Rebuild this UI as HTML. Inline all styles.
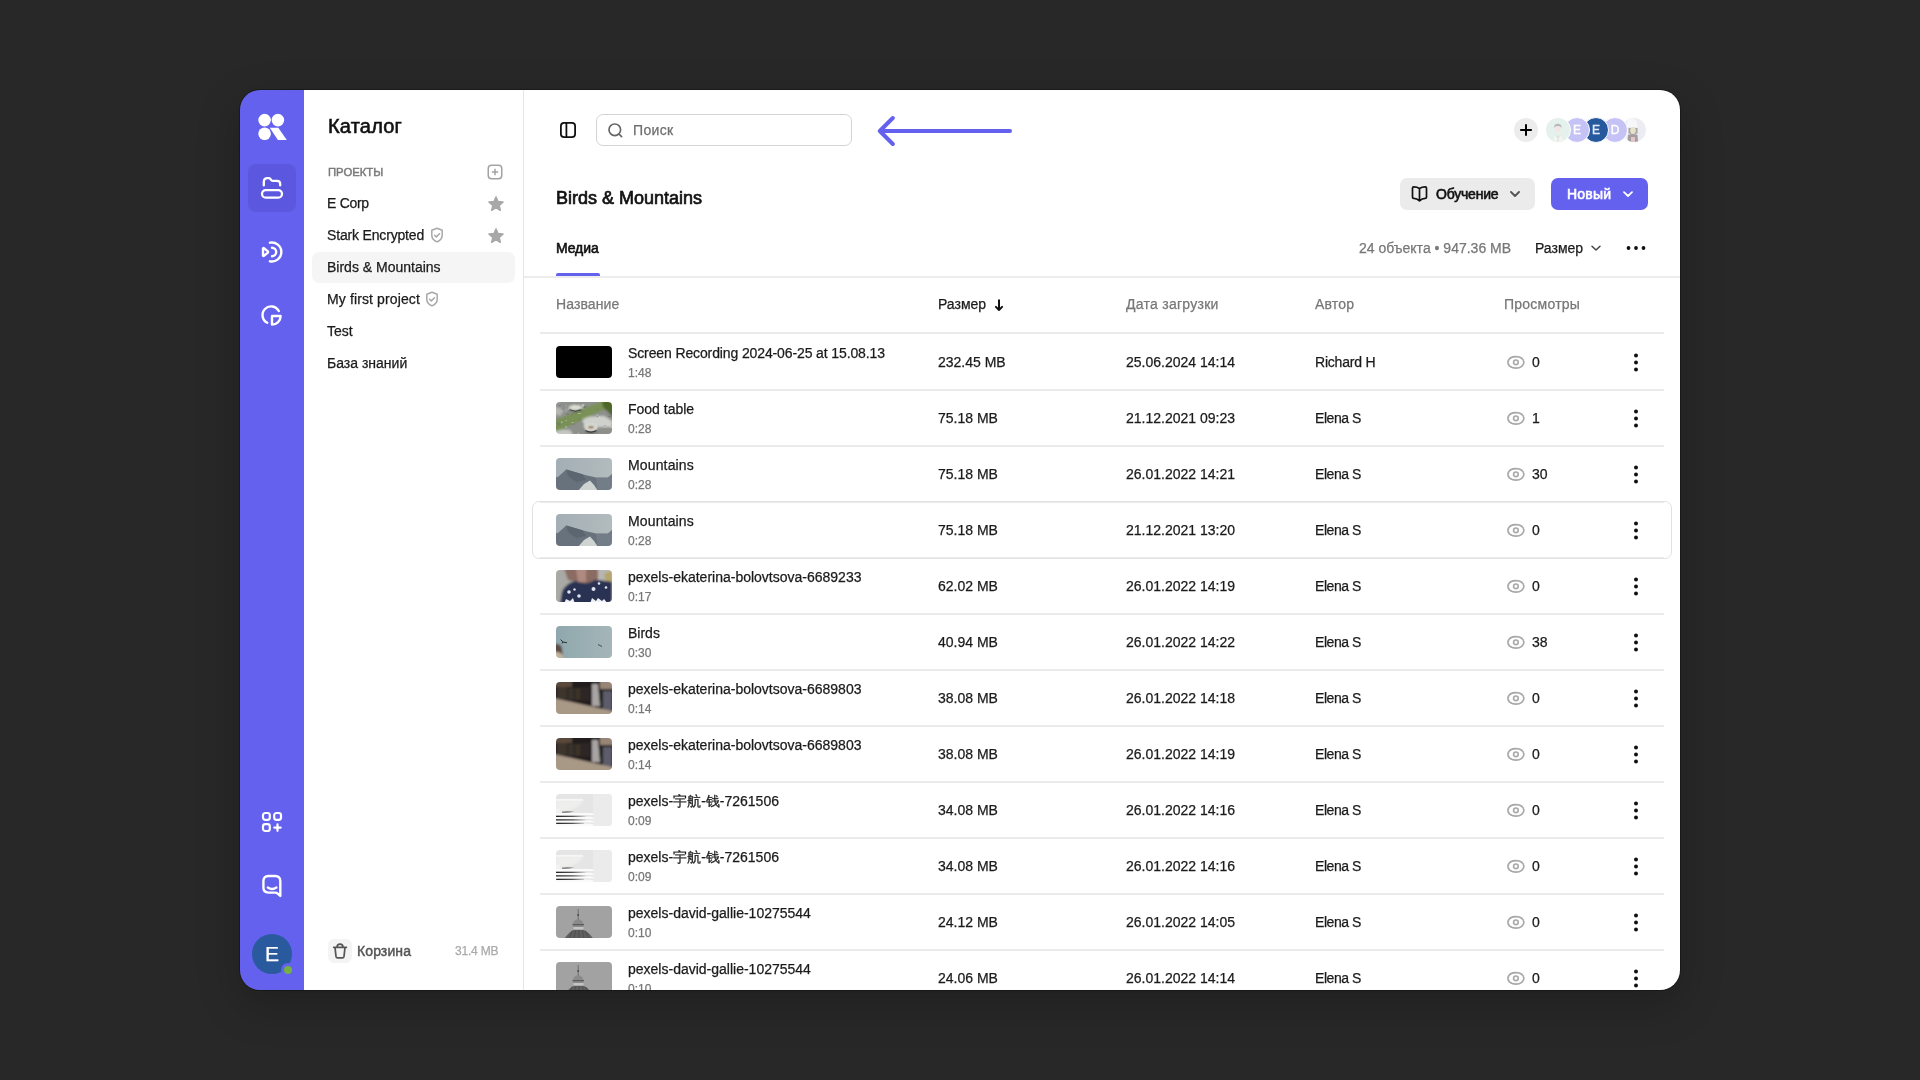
<!DOCTYPE html>
<html><head><meta charset="utf-8">
<style>
*{box-sizing:border-box;margin:0;padding:0}
html,body{width:1920px;height:1080px;overflow:hidden;background:#282828}
body{font-family:"Liberation Sans",sans-serif;color:#1b1b1b;position:relative;-webkit-text-stroke-width:0.25px}
#app{position:absolute;left:0;top:0;width:1920px;height:1080px;background:#fff;will-change:transform;clip-path:inset(90px 240px 90px 240px round 20px)}
.a{position:absolute;white-space:nowrap}
#nav{position:absolute;left:240px;top:90px;width:64px;height:900px;background:#6461ef}
#side{position:absolute;left:304px;top:90px;width:220px;height:900px;background:#fff;border-right:1px solid #e6e6e6}
.navact{position:absolute;left:248px;top:164px;width:48px;height:48px;border-radius:8px;background:#5b58df}
.ic{position:absolute;fill:none;stroke:#fff;stroke-width:2.3;stroke-linecap:round;stroke-linejoin:round}
.proj{position:absolute;left:327px;font-size:14px;line-height:16px;color:#1b1b1b;white-space:nowrap}
.sel{position:absolute;left:312px;top:252px;width:203px;height:31px;border-radius:7px;background:#f5f5f5}
.row{position:absolute;left:540px;width:1124px;height:56px;border-bottom:2px solid #ebebeb}
.row .th{position:absolute;left:16px;top:11px;border-radius:4px}
.row .nm{position:absolute;left:88px;top:10px;font-size:14px;line-height:16px;white-space:nowrap;color:#1b1b1b}
.row .du{position:absolute;left:88px;top:31px;font-size:12px;line-height:14px;color:#777;white-space:nowrap}
.row .c{position:absolute;top:19px;font-size:14px;line-height:16px;white-space:nowrap;color:#1b1b1b}
.row .sz{left:398px}.row .dt{left:586px}.row .au{left:775px}.row .vw{left:992px}
.row .eye{position:absolute;left:966px;top:17px}
.row .dots{position:absolute;left:1093px;top:17px;fill:#111}
.row.hov::after{content:"";box-sizing:border-box;position:absolute;left:-8px;top:-2px;width:1140px;height:58px;border:1px solid #e2e2e2;border-radius:7px}
.hdr{position:absolute;top:296px;font-size:14px;line-height:16px;color:#777;white-space:nowrap}
</style></head><body>
<div class="a" style="left:240px;top:90px;width:1440px;height:900px;border-radius:20px;box-shadow:0 0 0 1px rgba(0,0,0,.3),0 14px 44px rgba(0,0,0,.22)"></div>
<div id="app">
 <div id="nav"></div>
 <div class="navact"></div>
 <!-- logo -->
 <svg class="a" style="left:252px;top:106px" width="40" height="40" viewBox="0 0 40 40">
  <circle cx="12.6" cy="14.1" r="6.3" fill="#fff"/>
  <circle cx="25.9" cy="14.1" r="6.3" fill="#fff"/>
  <circle cx="12.6" cy="27.8" r="6.3" fill="#fff"/>
  <path d="M17.8 21.7 H26.3 L34.8 33.9 H25.9 Z" fill="#fff"/>
 </svg>
 <!-- drive icon -->
 <svg class="ic" style="left:260px;top:176px" width="24" height="24" viewBox="0 0 24 24">
  <path d="M3.8 9.4 V6 Q3.8 2.2 7.4 2.2 H8.6 Q9.8 2.2 10.6 3.2 L11.4 4.2 Q12 4.8 13 4.8 H17 Q20.2 4.8 20.2 8 V9.4"/>
  <rect x="2" y="14.2" width="20" height="7.4" rx="3.7"/>
 </svg>
 <!-- broadcast -->
 <svg class="ic" style="left:256px;top:236px;stroke-width:2.4" width="32" height="32" viewBox="0 0 32 32">
  <path d="M13.9 6.7 A9.5 9.5 0 1 1 13.9 25.3"/>
  <path d="M16 11.8 A4.2 4.2 0 0 1 16 20.2"/>
  <path d="M7 12.6 Q7 11.6 8 12.2 L11.6 15.1 Q12.6 16 11.6 16.9 L8 19.8 Q7 20.4 7 19.4 Z"/>
 </svg>
 <!-- pie -->
 <svg class="ic" style="left:256px;top:300px;stroke-width:2.4" width="32" height="32" viewBox="0 0 32 32">
  <path d="M22.8 11 A8.65 8.65 0 1 0 11.3 22.8"/>
  <path d="M16 16 H24.6 A8.6 8.6 0 0 1 16 24.6 Z"/>
 </svg>
 <!-- apps -->
 <svg class="ic" style="left:256px;top:806px;stroke-width:2.2" width="32" height="32" viewBox="0 0 32 32">
  <rect x="7" y="7" width="6.8" height="6.8" rx="2.3"/>
  <rect x="18.2" y="7" width="6.8" height="6.8" rx="2.3"/>
  <rect x="7" y="18.2" width="6.8" height="6.8" rx="2.3"/>
  <path d="M21.5 18.4 V24.8 M18.3 21.6 H24.7"/>
 </svg>
 <!-- chat -->
 <svg class="ic" style="left:256px;top:870px;stroke-width:2.4" width="32" height="32" viewBox="0 0 32 32">
  <path d="M24.3 26 V11 Q24.3 6 19.3 6 H12.4 Q7.4 6 7.4 11 V17.6 Q7.4 22.6 12.4 22.6 H19 Q20.6 22.6 22 23.8 Z"/>
  <path d="M11.8 17.6 Q16 20.4 20.4 17.6"/>
 </svg>
 <!-- avatar -->
 <div class="a" style="left:252px;top:934px;width:40px;height:40px;border-radius:50%;background:#2a5a9e;color:#fff;font-size:21px;line-height:40px;text-align:center">E</div>
 <div class="a" style="left:281px;top:963px;width:14px;height:14px;border-radius:50%;background:#75b043;border:3px solid #6461ef"></div>

 <div id="side"></div>
 <div class="a" style="left:328px;top:114px;font-size:20px;line-height:24px;letter-spacing:0.2px;color:#111;-webkit-text-stroke:0.6px currentColor">Каталог</div>
 <div class="a" style="left:328px;top:165px;font-size:11.3px;line-height:14px;color:#7a7a7a;letter-spacing:0px;-webkit-text-stroke:0.45px currentColor">ПРОЕКТЫ</div>
 <svg class="a" style="left:487px;top:164px" width="16" height="16" viewBox="0 0 16 16"><rect x="1.25" y="1.25" width="13.5" height="13.5" rx="3.2" fill="none" stroke="#a3a3a3" stroke-width="1.5"/><path d="M8 4.8 V11.2 M4.8 8 H11.2" stroke="#a3a3a3" stroke-width="1.5"/></svg>
 <div class="sel"></div>
 <div class="proj" style="top:195px;letter-spacing:-0.3px">E Corp</div>
 <div class="proj" style="top:227px;letter-spacing:-0.17px">Stark Encrypted</div>
 <div class="proj" style="top:259px">Birds &amp; Mountains</div>
 <div class="proj" style="top:291px;letter-spacing:0.12px">My first project</div>
 <div class="proj" style="top:323px">Test</div>
 <div class="proj" style="top:355px">База знаний</div>
 <svg class="a" style="left:430px;top:227px" width="14" height="16" viewBox="0 0 14 16"><path d="M7 1.3 L12.2 3.3 V8.2 Q12.2 12.6 7 14.9 Q1.8 12.6 1.8 8.2 V3.3 Z" fill="none" stroke="#a8a8a8" stroke-width="1.5" stroke-linejoin="round"/><path d="M4.6 8.3 L6.3 9.9 L9.5 6.7" fill="none" stroke="#a8a8a8" stroke-width="1.5" stroke-linecap="round" stroke-linejoin="round"/></svg>
 <svg class="a" style="left:425px;top:291px" width="14" height="16" viewBox="0 0 14 16"><path d="M7 1.3 L12.2 3.3 V8.2 Q12.2 12.6 7 14.9 Q1.8 12.6 1.8 8.2 V3.3 Z" fill="none" stroke="#a8a8a8" stroke-width="1.5" stroke-linejoin="round"/><path d="M4.6 8.3 L6.3 9.9 L9.5 6.7" fill="none" stroke="#a8a8a8" stroke-width="1.5" stroke-linecap="round" stroke-linejoin="round"/></svg>
 <svg class="a" style="left:487px;top:195px" width="18" height="18" viewBox="0 0 18 18"><path d="M9.00 2.00 L10.93 6.64 L15.94 7.04 L12.12 10.32 L13.29 15.21 L9.00 12.59 L4.71 15.21 L5.88 10.32 L2.06 7.04 L7.07 6.64 Z" fill="#a8a8a8" stroke="#a8a8a8" stroke-width="1.6" stroke-linejoin="round"/></svg>
 <svg class="a" style="left:487px;top:227px" width="18" height="18" viewBox="0 0 18 18"><path d="M9.00 2.00 L10.93 6.64 L15.94 7.04 L12.12 10.32 L13.29 15.21 L9.00 12.59 L4.71 15.21 L5.88 10.32 L2.06 7.04 L7.07 6.64 Z" fill="#a8a8a8" stroke="#a8a8a8" stroke-width="1.6" stroke-linejoin="round"/></svg>
 <!-- trash -->
 <div class="a" style="left:328px;top:939px;width:24px;height:24px;border-radius:6px;background:#f4f4f4"></div>
 <svg class="a" style="left:330px;top:941px" width="20" height="20" viewBox="0 0 20 20"><path d="M3.7 6.3 H16.4 M7 6.3 Q7 3.2 10 3.2 Q13 3.2 13 6.3 M5 6.3 L6 15.4 Q6.2 16.9 7.6 16.9 H12.4 Q13.8 16.9 14 15.4 L15 6.3" fill="none" stroke="#555" stroke-width="1.7" stroke-linecap="round" stroke-linejoin="round"/></svg>
 <div class="a" style="left:357px;top:943px;font-size:14px;line-height:16px;color:#555;letter-spacing:0.1px;-webkit-text-stroke:0.45px currentColor">Корзина</div>
 <div class="a" style="left:455px;top:944px;font-size:12px;line-height:14px;color:#aaa;letter-spacing:-0.2px">31.4 MB</div>

 <!-- top bar -->
 <svg class="a" style="left:558px;top:120px" width="20" height="20" viewBox="0 0 20 20"><rect x="2.9" y="2.9" width="14.2" height="14.2" rx="3.2" fill="none" stroke="#111" stroke-width="1.8"/><path d="M8.4 3 V17" stroke="#111" stroke-width="1.8"/></svg>
 <div class="a" style="left:596px;top:114px;width:256px;height:32px;border:1px solid #d4d4d4;border-radius:7px"></div>
 <svg class="a" style="left:606px;top:121px" width="18" height="18" viewBox="0 0 18 18"><circle cx="8.8" cy="8.8" r="5.8" fill="none" stroke="#666" stroke-width="1.7"/><path d="M13 13 L15.6 15.6" stroke="#666" stroke-width="1.7" stroke-linecap="round"/></svg>
 <div class="a" style="left:633px;top:122px;font-size:14px;line-height:16px;color:#6f6f6f;letter-spacing:0.35px">Поиск</div>
 <svg class="a" style="left:870px;top:110px" width="150" height="40" viewBox="0 0 150 40"><path d="M22.8 8 L9.8 21 L22.8 34 M9.8 21 H140" fill="none" stroke="#6461ef" stroke-width="4" stroke-linecap="round" stroke-linejoin="round"/></svg>

 <!-- avatars -->
 <div class="a" style="left:1514px;top:118px;width:24px;height:24px;border-radius:50%;background:#ececec"></div>
 <svg class="a" style="left:1514px;top:118px" width="24" height="24" viewBox="0 0 24 24"><path d="M12 6.2 V17.8 M6.2 12 H17.8" stroke="#000" stroke-width="2"/></svg>
 <div class="a" style="z-index:5;left:1545px;top:117px;width:26px;height:26px;border-radius:50%;background:#e6f0ec;border:1.5px solid #fff"></div>
 <svg class="a" style="z-index:5;left:1546px;top:118px" width="24" height="24" viewBox="0 0 24 24"><circle cx="12" cy="12" r="11.6" fill="#e5f1ec"/><path d="M7.5 24 Q7.8 16.5 12 15.8 Q16.2 16.5 16.5 24Z" fill="#f3f5f3"/><path d="M12 16 V24 M9.5 17 L12 20 L14.5 17" stroke="#d4d8d4" stroke-width=".8" fill="none"/><ellipse cx="11.8" cy="11" rx="2.6" ry="3.2" fill="#f7e4e4"/><path d="M8 10 Q8 5.8 11.8 5.8 Q15.6 5.8 15.6 10 Q14.6 8 11.8 8 Q9 8 8 10Z" fill="#b9b9b9"/></svg>
 <div class="a" style="z-index:4;left:1564px;top:117px;width:26px;height:26px;border-radius:50%;background:#c5c2f6;border:1.5px solid #fff;color:#fff;font-size:12px;line-height:25px;text-align:center;-webkit-text-stroke:0.4px currentColor">E</div>
 <div class="a" style="z-index:3;left:1583px;top:117px;width:26px;height:26px;border-radius:50%;background:#26589e;border:1.5px solid #fff;color:#dfeaff;font-size:12px;line-height:25px;text-align:center;-webkit-text-stroke:0.4px currentColor">E</div>
 <div class="a" style="z-index:2;left:1602px;top:117px;width:26px;height:26px;border-radius:50%;background:#c5c2f6;border:1.5px solid #fff;color:#fff;font-size:12px;line-height:25px;text-align:center;-webkit-text-stroke:0.4px currentColor">D</div>
 <div class="a" style="z-index:1;left:1621px;top:117px;width:26px;height:26px;border-radius:50%;background:#ececf3;border:1.5px solid #fff;overflow:hidden"><svg width="24" height="24" viewBox="0 0 24 24" style="display:block"><path d="M4.5 9 Q4 1 10 0.5 Q16 1 15.5 9Z" fill="#f7f7fa"/><path d="M5.5 24 L6 17 Q10.5 15 15.5 17 L16 24Z" fill="#a49c9e"/><rect x="9" y="19" width="4" height="5" fill="#e2c6c8"/><path d="M6.5 10 H15.5 V15.5 Q11 17 6.5 15.5Z" fill="#a7a5a2"/><ellipse cx="11" cy="12.5" rx="2.8" ry="3.6" fill="#e6e2cc"/></svg></div>

 <!-- title + buttons -->
 <div class="a" style="left:556px;top:187px;font-size:18px;line-height:22px;color:#111;-webkit-text-stroke:0.7px #111">Birds &amp; Mountains</div>
 <div class="a" style="left:1400px;top:178px;width:135px;height:32px;border-radius:7px;background:#ebebeb"></div>
 <svg class="a" style="left:1409px;top:184px" width="20" height="20" viewBox="0 0 20 20"><path d="M10.5 4.5 Q8 2.9 4.8 2.9 Q3.5 2.9 3.5 4 V13.2 Q3.5 14.3 4.8 14.3 Q8 14.3 10.5 16.8 Q13 14.3 16.2 14.3 Q17.5 14.3 17.5 13.2 V4 Q17.5 2.9 16.2 2.9 Q13 2.9 10.5 4.5Z M10.5 4.5 V16.8" fill="none" stroke="#111" stroke-width="1.7" stroke-linejoin="round" stroke-linecap="round"/></svg>
 <div class="a" style="left:1436px;top:186px;font-size:14px;line-height:16px;color:#111;letter-spacing:-0.2px;-webkit-text-stroke:0.6px currentColor">Обучение</div>
 <svg class="a" style="left:1508px;top:187px" width="14" height="14" viewBox="0 0 14 14"><path d="M3 5 L7 9 L11 5" fill="none" stroke="#555" stroke-width="1.9" stroke-linecap="round" stroke-linejoin="round"/></svg>
 <div class="a" style="left:1551px;top:178px;width:97px;height:32px;border-radius:7px;background:#6461ef"></div>
 <div class="a" style="left:1567px;top:186px;font-size:14px;line-height:16px;color:#fff;letter-spacing:0.2px;-webkit-text-stroke:0.6px currentColor">Новый</div>
 <svg class="a" style="left:1621px;top:187px" width="14" height="14" viewBox="0 0 14 14"><path d="M3 5.2 L7 9 L11 5.2" fill="none" stroke="#fff" stroke-width="1.8" stroke-linecap="round" stroke-linejoin="round"/></svg>

 <!-- tabs -->
 <div class="a" style="left:556px;top:240px;font-size:14px;line-height:16px;color:#111;letter-spacing:-0.1px;-webkit-text-stroke:0.6px currentColor">Медиа</div>
 <div class="a" style="left:556px;top:273px;width:44px;height:5px;border-radius:2px 2px 0 0;background:#6461ef"></div>
 <div class="a" style="left:524px;top:276px;width:1156px;height:2px;background:#ececec"></div>
 <div class="a" style="left:1359px;top:240px;font-size:14px;line-height:16px;color:#777">24 объекта • 947.36 MB</div>
 <div class="a" style="left:1535px;top:240px;font-size:14px;line-height:16px;color:#1b1b1b">Размер</div>
 <svg class="a" style="left:1589px;top:241px" width="14" height="14" viewBox="0 0 14 14"><path d="M3 5.2 L7 9 L11 5.2" fill="none" stroke="#444" stroke-width="1.5" stroke-linecap="round" stroke-linejoin="round"/></svg>
 <svg class="a" style="left:1626px;top:238px" width="20" height="20" viewBox="0 0 20 20"><circle cx="2.5" cy="10" r="1.9" fill="#111"/><circle cx="10" cy="10" r="1.9" fill="#111"/><circle cx="17.5" cy="10" r="1.9" fill="#111"/></svg>

 <!-- table header -->
 <div class="hdr" style="left:556px;letter-spacing:0.1px">Название</div>
 <div class="hdr" style="left:938px;color:#1b1b1b">Размер</div>
 <svg class="a" style="left:992px;top:297px" width="14" height="16" viewBox="0 0 14 16"><path d="M7 3.2 V13 M3.9 9.9 L7 13 L10.1 9.9" fill="none" stroke="#111" stroke-width="2" stroke-linecap="round" stroke-linejoin="round"/></svg>
 <div class="hdr" style="left:1126px;letter-spacing:0.27px">Дата загрузки</div>
 <div class="hdr" style="left:1315px;letter-spacing:0.2px">Автор</div>
 <div class="hdr" style="left:1504px;letter-spacing:0.24px">Просмотры</div>
 <div class="a" style="left:540px;top:332px;width:1124px;height:2px;background:#ebebeb"></div>
<div class="row" style="top:335px">
 <svg class="th" width="56" height="32" viewBox="0 0 56 32"><rect width="56" height="32" fill="#000"/></svg>
 <div class="nm" style="letter-spacing:-0.12px">Screen Recording 2024-06-25 at 15.08.13</div><div class="du">1:48</div>
 <div class="c sz">232.45 MB</div><div class="c dt">25.06.2024 14:14</div><div class="c au" style="letter-spacing:-0.2px">Richard H</div>
 <svg class="eye" width="20" height="20" viewBox="0 0 20 20"><path d="M1.8 10.35 C2.4 7 5.6 4.6 9.9 4.6 C14.2 4.6 17.4 7 18 10.35 C17.4 13.7 14.2 16.1 9.9 16.1 C5.6 16.1 2.4 13.7 1.8 10.35Z" fill="none" stroke="#a8a8a8" stroke-width="1.6"/><circle cx="9.9" cy="10.3" r="2.35" fill="none" stroke="#a8a8a8" stroke-width="1.6"/></svg><div class="c vw">0</div><svg class="dots" width="6" height="20" viewBox="0 0 6 20"><circle cx="3" cy="3.5" r="2"/><circle cx="3" cy="10.5" r="2"/><circle cx="3" cy="17.5" r="2"/></svg>
</div>
<div class="row" style="top:391px">
 <svg class="th" width="56" height="32" viewBox="0 0 56 32"><defs><filter id="bfood" x="-10%" y="-10%" width="120%" height="120%"><feGaussianBlur stdDeviation="0.8"/></filter></defs><g filter="url(#bfood)"><rect x="-2" y="-2" width="60" height="36" fill="#8e908c"/><path d="M26 15 L48 14 L56 19 L56 25 L28 25 Z" fill="#cfd1cd"/><path d="M-2 27 L14 28 L18 34 H-2Z" fill="#c4c6c2"/><path d="M-2 4 L8 8 L4 14 L-2 12Z" fill="#b4b6b2"/><path d="M-2 18 C8 15 18 10 28 6 C36 3 42 1 48 -2 L58 -2 L58 4 C46 8 36 13 28 17 C18 22 8 27 -2 30Z" fill="#74904a" opacity=".8"/><path d="M46 -2 H58 V16 C55 13 51 9 47 5Z" fill="#4a6224" opacity=".9"/><ellipse cx="19.5" cy="6" rx="7" ry="3" fill="#dde2d4"/><path d="M13 7.5 Q19.5 11 26 7.5" stroke="#2a2a2a" stroke-width="1.3" fill="none"/><ellipse cx="35" cy="26" rx="6" ry="3.6" fill="#eef0ec"/><ellipse cx="35" cy="25.2" rx="3.6" ry="1.5" fill="#8a7048"/><path d="M29 28.5 Q35 32.5 41 28.5" stroke="#1e1e1e" stroke-width="1.5" fill="none"/></g><ellipse cx="18.1" cy="4.8" rx="0.7" ry="0.7" fill="#e8eae6" opacity=".45"/><ellipse cx="20.5" cy="1.9" rx="0.9" ry="0.5" fill="#707270" opacity=".45"/><ellipse cx="23.4" cy="7.7" rx="1.1" ry="0.9" fill="#707270" opacity=".45"/><ellipse cx="6.9" cy="7.1" rx="1.7" ry="0.7" fill="#707270" opacity=".45"/><ellipse cx="22.2" cy="31.2" rx="1.3" ry="0.5" fill="#e8eae6" opacity=".45"/><ellipse cx="23.5" cy="17.3" rx="1.0" ry="0.9" fill="#707270" opacity=".45"/><ellipse cx="10.1" cy="18.6" rx="1.0" ry="0.7" fill="#d0d2ce" opacity=".45"/><ellipse cx="3.5" cy="1.9" rx="1.2" ry="0.7" fill="#d0d2ce" opacity=".45"/><ellipse cx="43.5" cy="14.9" rx="1.0" ry="0.5" fill="#f2f2f0" opacity=".45"/><ellipse cx="10.1" cy="25.0" rx="1.3" ry="0.7" fill="#e8eae6" opacity=".45"/><ellipse cx="49.0" cy="23.3" rx="1.3" ry="0.4" fill="#5a5c58" opacity=".45"/><ellipse cx="28.7" cy="5.3" rx="0.8" ry="0.7" fill="#5a5c58" opacity=".45"/><ellipse cx="2.2" cy="21.4" rx="1.3" ry="0.9" fill="#707270" opacity=".45"/><ellipse cx="17.6" cy="22.2" rx="1.2" ry="0.9" fill="#707270" opacity=".45"/><ellipse cx="3.9" cy="3.0" rx="1.2" ry="0.8" fill="#5a5c58" opacity=".45"/><ellipse cx="3.4" cy="22.4" rx="1.8" ry="0.9" fill="#707270" opacity=".45"/><ellipse cx="15.9" cy="12.3" rx="0.6" ry="0.7" fill="#5a5c58" opacity=".45"/><ellipse cx="9.4" cy="3.7" rx="0.9" ry="0.6" fill="#e8eae6" opacity=".45"/><ellipse cx="41.3" cy="12.7" rx="0.7" ry="0.7" fill="#f2f2f0" opacity=".45"/><ellipse cx="30.8" cy="28.3" rx="1.6" ry="0.6" fill="#f2f2f0" opacity=".45"/><ellipse cx="23.3" cy="11.5" rx="1.7" ry="0.5" fill="#f2f2f0" opacity=".45"/><ellipse cx="9.9" cy="7.4" rx="0.6" ry="0.9" fill="#d0d2ce" opacity=".45"/><ellipse cx="10.2" cy="9.0" rx="1.1" ry="0.6" fill="#d0d2ce" opacity=".45"/><ellipse cx="31.7" cy="30.5" rx="1.7" ry="0.8" fill="#707270" opacity=".45"/><ellipse cx="41.4" cy="14.6" rx="1.1" ry="0.6" fill="#707270" opacity=".45"/><ellipse cx="5.8" cy="20.3" rx="0.8" ry="1.0" fill="#e8eae6" opacity=".45"/><ellipse cx="24.7" cy="3.5" rx="0.7" ry="0.4" fill="#707270" opacity=".45"/><ellipse cx="8.5" cy="3.2" rx="1.3" ry="0.4" fill="#5a5c58" opacity=".45"/><ellipse cx="11.6" cy="12.0" rx="1.7" ry="0.8" fill="#5a5c58" opacity=".45"/><ellipse cx="26.6" cy="3.7" rx="1.8" ry="0.7" fill="#f2f2f0" opacity=".45"/><ellipse cx="27.1" cy="2.7" rx="1.5" ry="0.8" fill="#e8eae6" opacity=".45"/><ellipse cx="26.8" cy="22.1" rx="0.6" ry="1.0" fill="#707270" opacity=".45"/><ellipse cx="29.6" cy="4.7" rx="1.7" ry="0.9" fill="#707270" opacity=".45"/><ellipse cx="16.7" cy="20.6" rx="1.4" ry="0.6" fill="#e8eae6" opacity=".45"/><ellipse cx="20.5" cy="5.3" rx="1.2" ry="0.9" fill="#d0d2ce" opacity=".45"/><ellipse cx="18.5" cy="7.1" rx="1.6" ry="0.9" fill="#d0d2ce" opacity=".45"/><ellipse cx="41.4" cy="7.3" rx="1.2" ry="0.8" fill="#707270" opacity=".45"/><ellipse cx="55.4" cy="25.3" rx="0.9" ry="0.8" fill="#f2f2f0" opacity=".45"/><ellipse cx="53.6" cy="14.3" rx="1.7" ry="0.6" fill="#5a5c58" opacity=".45"/><ellipse cx="12.3" cy="7.3" rx="1.0" ry="0.7" fill="#d0d2ce" opacity=".45"/><path d="M13.5 7.8 Q19.5 10.6 25.5 7.8" stroke="#333" stroke-width="1" fill="none" opacity=".8"/><path d="M29.5 28.6 Q35 31.6 40.5 28.6" stroke="#222" stroke-width="1.1" fill="none" opacity=".8"/></svg>
 <div class="nm">Food table</div><div class="du">0:28</div>
 <div class="c sz">75.18 MB</div><div class="c dt">21.12.2021 09:23</div><div class="c au" style="letter-spacing:-0.45px">Elena S</div>
 <svg class="eye" width="20" height="20" viewBox="0 0 20 20"><path d="M1.8 10.35 C2.4 7 5.6 4.6 9.9 4.6 C14.2 4.6 17.4 7 18 10.35 C17.4 13.7 14.2 16.1 9.9 16.1 C5.6 16.1 2.4 13.7 1.8 10.35Z" fill="none" stroke="#a8a8a8" stroke-width="1.6"/><circle cx="9.9" cy="10.3" r="2.35" fill="none" stroke="#a8a8a8" stroke-width="1.6"/></svg><div class="c vw">1</div><svg class="dots" width="6" height="20" viewBox="0 0 6 20"><circle cx="3" cy="3.5" r="2"/><circle cx="3" cy="10.5" r="2"/><circle cx="3" cy="17.5" r="2"/></svg>
</div>
<div class="row" style="top:447px">
 <svg class="th" width="56" height="32" viewBox="0 0 56 32"><defs><linearGradient id="gsky" x1="0" x2="1" y1="0" y2="0"><stop offset="0" stop-color="#a2adb5"/><stop offset="1" stop-color="#b3bcbd"/></linearGradient><filter id="bmnt" x="-10%" y="-10%" width="120%" height="120%"><feGaussianBlur stdDeviation="0.5"/></filter></defs><g filter="url(#bmnt)"><rect x="-2" y="-2" width="60" height="36" fill="url(#gsky)"/><path d="M-2 19.5 L2 19 L10.2 11.5 L20.5 14.5 L27 16.5 L40 19.5 L52 19.5 L56 16 V34 H-2Z" fill="#68727d"/><path d="M10.2 11.5 L20.5 14.5 L27 16.5 L30 22 L20 24 L12 18Z" fill="#5c6670"/><path d="M40 20 L52 20 L56 17 V34 H42Z" fill="#737d88"/><path d="M22 33 L28 26 L34 22.5 L38 27 L42 33Z" fill="#cfd4d2"/></g></svg>
 <div class="nm" style="letter-spacing:0.15px">Mountains</div><div class="du">0:28</div>
 <div class="c sz">75.18 MB</div><div class="c dt">26.01.2022 14:21</div><div class="c au" style="letter-spacing:-0.45px">Elena S</div>
 <svg class="eye" width="20" height="20" viewBox="0 0 20 20"><path d="M1.8 10.35 C2.4 7 5.6 4.6 9.9 4.6 C14.2 4.6 17.4 7 18 10.35 C17.4 13.7 14.2 16.1 9.9 16.1 C5.6 16.1 2.4 13.7 1.8 10.35Z" fill="none" stroke="#a8a8a8" stroke-width="1.6"/><circle cx="9.9" cy="10.3" r="2.35" fill="none" stroke="#a8a8a8" stroke-width="1.6"/></svg><div class="c vw">30</div><svg class="dots" width="6" height="20" viewBox="0 0 6 20"><circle cx="3" cy="3.5" r="2"/><circle cx="3" cy="10.5" r="2"/><circle cx="3" cy="17.5" r="2"/></svg>
</div>
<div class="row hov" style="top:503px">
 <svg class="th" width="56" height="32" viewBox="0 0 56 32"><defs><linearGradient id="gsky" x1="0" x2="1" y1="0" y2="0"><stop offset="0" stop-color="#a2adb5"/><stop offset="1" stop-color="#b3bcbd"/></linearGradient><filter id="bmnt" x="-10%" y="-10%" width="120%" height="120%"><feGaussianBlur stdDeviation="0.5"/></filter></defs><g filter="url(#bmnt)"><rect x="-2" y="-2" width="60" height="36" fill="url(#gsky)"/><path d="M-2 19.5 L2 19 L10.2 11.5 L20.5 14.5 L27 16.5 L40 19.5 L52 19.5 L56 16 V34 H-2Z" fill="#68727d"/><path d="M10.2 11.5 L20.5 14.5 L27 16.5 L30 22 L20 24 L12 18Z" fill="#5c6670"/><path d="M40 20 L52 20 L56 17 V34 H42Z" fill="#737d88"/><path d="M22 33 L28 26 L34 22.5 L38 27 L42 33Z" fill="#cfd4d2"/></g></svg>
 <div class="nm" style="letter-spacing:0.15px">Mountains</div><div class="du">0:28</div>
 <div class="c sz">75.18 MB</div><div class="c dt">21.12.2021 13:20</div><div class="c au" style="letter-spacing:-0.45px">Elena S</div>
 <svg class="eye" width="20" height="20" viewBox="0 0 20 20"><path d="M1.8 10.35 C2.4 7 5.6 4.6 9.9 4.6 C14.2 4.6 17.4 7 18 10.35 C17.4 13.7 14.2 16.1 9.9 16.1 C5.6 16.1 2.4 13.7 1.8 10.35Z" fill="none" stroke="#a8a8a8" stroke-width="1.6"/><circle cx="9.9" cy="10.3" r="2.35" fill="none" stroke="#a8a8a8" stroke-width="1.6"/></svg><div class="c vw">0</div><svg class="dots" width="6" height="20" viewBox="0 0 6 20"><circle cx="3" cy="3.5" r="2"/><circle cx="3" cy="10.5" r="2"/><circle cx="3" cy="17.5" r="2"/></svg>
</div>
<div class="row" style="top:559px">
 <svg class="th" width="56" height="32" viewBox="0 0 56 32"><defs><filter id="bsw" x="-10%" y="-10%" width="120%" height="120%"><feGaussianBlur stdDeviation="0.8"/></filter></defs><g filter="url(#bsw)"><rect x="-2" y="-2" width="60" height="36" fill="#a9a9a5"/><rect x="40" y="-2" width="18" height="14" fill="#b8b6b2"/><path d="M48 4 L56 0 V12 L50 12Z" fill="#b5a56a"/><path d="M8 -2 H42 V12 C36 14 26 14 20 12 L12 10 Z" fill="#8a6c62"/><path d="M20 -2 H30 V12 H22Z" fill="#b08a80"/><path d="M4 34 L6 22 C8 16 14 12 20 11 C26 14 34 14 38 10 C44 10 52 11 56 12 V34Z" fill="#2a3152"/></g><circle cx="13" cy="22" r="1.8" fill="#dfe4ee"/><circle cx="18.5" cy="19.5" r="1.2" fill="#dfe4ee"/><circle cx="23" cy="26" r="1.8" fill="#dfe4ee"/><circle cx="37.5" cy="19" r="2" fill="#dfe4ee"/><circle cx="43" cy="13.5" r="1.3" fill="#dfe4ee"/><circle cx="50" cy="17.5" r="1.3" fill="#dfe4ee"/><path d="M8 34 L10 29 L14 31 L17 28 L19 34Z M34 34 L36 28 L40 31 L42 28 L46 31 L48 29 L52 34Z" fill="#eef0f6"/></svg>
 <div class="nm">pexels-ekaterina-bolovtsova-6689233</div><div class="du">0:17</div>
 <div class="c sz">62.02 MB</div><div class="c dt">26.01.2022 14:19</div><div class="c au" style="letter-spacing:-0.45px">Elena S</div>
 <svg class="eye" width="20" height="20" viewBox="0 0 20 20"><path d="M1.8 10.35 C2.4 7 5.6 4.6 9.9 4.6 C14.2 4.6 17.4 7 18 10.35 C17.4 13.7 14.2 16.1 9.9 16.1 C5.6 16.1 2.4 13.7 1.8 10.35Z" fill="none" stroke="#a8a8a8" stroke-width="1.6"/><circle cx="9.9" cy="10.3" r="2.35" fill="none" stroke="#a8a8a8" stroke-width="1.6"/></svg><div class="c vw">0</div><svg class="dots" width="6" height="20" viewBox="0 0 6 20"><circle cx="3" cy="3.5" r="2"/><circle cx="3" cy="10.5" r="2"/><circle cx="3" cy="17.5" r="2"/></svg>
</div>
<div class="row" style="top:615px">
 <svg class="th" width="56" height="32" viewBox="0 0 56 32"><defs><filter id="bbd" x="-10%" y="-10%" width="120%" height="120%"><feGaussianBlur stdDeviation="0.8"/></filter></defs><g filter="url(#bbd)"><linearGradient id="gbd" x1="0" x2="1" y1="0" y2="0"><stop offset="0" stop-color="#8ea7ad"/><stop offset="1" stop-color="#a6b6b9"/></linearGradient><rect x="-2" y="-2" width="60" height="36" fill="url(#gbd)"/><path d="M-2 18 Q4 17 6 22 L7 34 H-2Z" fill="#5a4c44"/><path d="M-2 26 Q4 25 7 30 L7 34 H-2Z" fill="#c2b49c"/></g><path d="M4.5 13.5 L7 16 L11 16.8 M7 16 L6 17.5" stroke="#2a3236" stroke-width="1" fill="none"/><path d="M42 18.5 L44 19.5 L46 20.5" stroke="#3a4246" stroke-width="0.9" fill="none"/></svg>
 <div class="nm">Birds</div><div class="du">0:30</div>
 <div class="c sz">40.94 MB</div><div class="c dt">26.01.2022 14:22</div><div class="c au" style="letter-spacing:-0.45px">Elena S</div>
 <svg class="eye" width="20" height="20" viewBox="0 0 20 20"><path d="M1.8 10.35 C2.4 7 5.6 4.6 9.9 4.6 C14.2 4.6 17.4 7 18 10.35 C17.4 13.7 14.2 16.1 9.9 16.1 C5.6 16.1 2.4 13.7 1.8 10.35Z" fill="none" stroke="#a8a8a8" stroke-width="1.6"/><circle cx="9.9" cy="10.3" r="2.35" fill="none" stroke="#a8a8a8" stroke-width="1.6"/></svg><div class="c vw">38</div><svg class="dots" width="6" height="20" viewBox="0 0 6 20"><circle cx="3" cy="3.5" r="2"/><circle cx="3" cy="10.5" r="2"/><circle cx="3" cy="17.5" r="2"/></svg>
</div>
<div class="row" style="top:671px">
 <svg class="th" width="56" height="32" viewBox="0 0 56 32"><defs><filter id="brm" x="-10%" y="-10%" width="120%" height="120%"><feGaussianBlur stdDeviation="0.8"/></filter></defs><g filter="url(#brm)"><rect x="-2" y="-2" width="60" height="36" fill="#221c1a"/><rect x="-2" y="-2" width="18" height="7" fill="#5a4a3a"/><rect x="1" y="5" width="10" height="12" fill="#3e342e"/><rect x="12" y="6" width="6" height="12" fill="#37302a"/><rect x="19" y="6" width="6" height="12" fill="#3a3228"/><rect x="26" y="5" width="8" height="14" fill="#2e2628"/><rect x="44" y="-2" width="14" height="9" fill="#978676"/><rect x="47" y="9" width="9" height="20" fill="#5c5c6a"/><path d="M36 2 L42 2 L44 24 L36 24Z" fill="#a8a4a4"/><path d="M-2 16 L56 29 V34 H-2Z" fill="#a89886"/></g></svg>
 <div class="nm">pexels-ekaterina-bolovtsova-6689803</div><div class="du">0:14</div>
 <div class="c sz">38.08 MB</div><div class="c dt">26.01.2022 14:18</div><div class="c au" style="letter-spacing:-0.45px">Elena S</div>
 <svg class="eye" width="20" height="20" viewBox="0 0 20 20"><path d="M1.8 10.35 C2.4 7 5.6 4.6 9.9 4.6 C14.2 4.6 17.4 7 18 10.35 C17.4 13.7 14.2 16.1 9.9 16.1 C5.6 16.1 2.4 13.7 1.8 10.35Z" fill="none" stroke="#a8a8a8" stroke-width="1.6"/><circle cx="9.9" cy="10.3" r="2.35" fill="none" stroke="#a8a8a8" stroke-width="1.6"/></svg><div class="c vw">0</div><svg class="dots" width="6" height="20" viewBox="0 0 6 20"><circle cx="3" cy="3.5" r="2"/><circle cx="3" cy="10.5" r="2"/><circle cx="3" cy="17.5" r="2"/></svg>
</div>
<div class="row" style="top:727px">
 <svg class="th" width="56" height="32" viewBox="0 0 56 32"><defs><filter id="brm" x="-10%" y="-10%" width="120%" height="120%"><feGaussianBlur stdDeviation="0.8"/></filter></defs><g filter="url(#brm)"><rect x="-2" y="-2" width="60" height="36" fill="#221c1a"/><rect x="-2" y="-2" width="18" height="7" fill="#5a4a3a"/><rect x="1" y="5" width="10" height="12" fill="#3e342e"/><rect x="12" y="6" width="6" height="12" fill="#37302a"/><rect x="19" y="6" width="6" height="12" fill="#3a3228"/><rect x="26" y="5" width="8" height="14" fill="#2e2628"/><rect x="44" y="-2" width="14" height="9" fill="#978676"/><rect x="47" y="9" width="9" height="20" fill="#5c5c6a"/><path d="M36 2 L42 2 L44 24 L36 24Z" fill="#a8a4a4"/><path d="M-2 16 L56 29 V34 H-2Z" fill="#a89886"/></g></svg>
 <div class="nm">pexels-ekaterina-bolovtsova-6689803</div><div class="du">0:14</div>
 <div class="c sz">38.08 MB</div><div class="c dt">26.01.2022 14:19</div><div class="c au" style="letter-spacing:-0.45px">Elena S</div>
 <svg class="eye" width="20" height="20" viewBox="0 0 20 20"><path d="M1.8 10.35 C2.4 7 5.6 4.6 9.9 4.6 C14.2 4.6 17.4 7 18 10.35 C17.4 13.7 14.2 16.1 9.9 16.1 C5.6 16.1 2.4 13.7 1.8 10.35Z" fill="none" stroke="#a8a8a8" stroke-width="1.6"/><circle cx="9.9" cy="10.3" r="2.35" fill="none" stroke="#a8a8a8" stroke-width="1.6"/></svg><div class="c vw">0</div><svg class="dots" width="6" height="20" viewBox="0 0 6 20"><circle cx="3" cy="3.5" r="2"/><circle cx="3" cy="10.5" r="2"/><circle cx="3" cy="17.5" r="2"/></svg>
</div>
<div class="row" style="top:783px">
 <svg class="th" width="56" height="32" viewBox="0 0 56 32"><defs><linearGradient id="gpl" x1="0" x2="1" y1="0" y2="0"><stop offset="0" stop-color="#222"/><stop offset="0.55" stop-color="#555"/><stop offset="1" stop-color="#ddd"/></linearGradient><filter id="bpl" x="-10%" y="-10%" width="120%" height="120%"><feGaussianBlur stdDeviation="0.8"/></filter></defs><rect width="56" height="32" fill="#e5e5e5"/><rect x="37" y="0" width="19" height="32" fill="#ebebeb"/><g filter="url(#bpl)"><path d="M0 6 H28 L25 9 Q20 16.5 8 17 H0Z" fill="#eeeeec"/><path d="M0 14 L6 19 H0Z" fill="#f8f8f8"/></g><path d="M0 5.8 H27" stroke="#fbfbfb" stroke-width="1.2"/><path d="M6 17.8 Q11 17 18 17.8 Q12 19 6 18.4Z" fill="#3e3838"/><path d="M0 20 H34 Q37 20 37 21 M0 23.8 H34 Q37 23.8 37 24.8 M0 27.3 H34 Q37 27.3 37 28.3 M0 30.8 H34 Q37 30.8 37 31.8" stroke="#fafafa" stroke-width="2.2" fill="none"/><path d="M0 22.3 H30 M0 25.8 H30 M0 29.3 H28" stroke="url(#gpl)" stroke-width="1.3"/></svg>
 <div class="nm">pexels-宇航-钱-7261506</div><div class="du">0:09</div>
 <div class="c sz">34.08 MB</div><div class="c dt">26.01.2022 14:16</div><div class="c au" style="letter-spacing:-0.45px">Elena S</div>
 <svg class="eye" width="20" height="20" viewBox="0 0 20 20"><path d="M1.8 10.35 C2.4 7 5.6 4.6 9.9 4.6 C14.2 4.6 17.4 7 18 10.35 C17.4 13.7 14.2 16.1 9.9 16.1 C5.6 16.1 2.4 13.7 1.8 10.35Z" fill="none" stroke="#a8a8a8" stroke-width="1.6"/><circle cx="9.9" cy="10.3" r="2.35" fill="none" stroke="#a8a8a8" stroke-width="1.6"/></svg><div class="c vw">0</div><svg class="dots" width="6" height="20" viewBox="0 0 6 20"><circle cx="3" cy="3.5" r="2"/><circle cx="3" cy="10.5" r="2"/><circle cx="3" cy="17.5" r="2"/></svg>
</div>
<div class="row" style="top:839px">
 <svg class="th" width="56" height="32" viewBox="0 0 56 32"><defs><linearGradient id="gpl" x1="0" x2="1" y1="0" y2="0"><stop offset="0" stop-color="#222"/><stop offset="0.55" stop-color="#555"/><stop offset="1" stop-color="#ddd"/></linearGradient><filter id="bpl" x="-10%" y="-10%" width="120%" height="120%"><feGaussianBlur stdDeviation="0.8"/></filter></defs><rect width="56" height="32" fill="#e5e5e5"/><rect x="37" y="0" width="19" height="32" fill="#ebebeb"/><g filter="url(#bpl)"><path d="M0 6 H28 L25 9 Q20 16.5 8 17 H0Z" fill="#eeeeec"/><path d="M0 14 L6 19 H0Z" fill="#f8f8f8"/></g><path d="M0 5.8 H27" stroke="#fbfbfb" stroke-width="1.2"/><path d="M6 17.8 Q11 17 18 17.8 Q12 19 6 18.4Z" fill="#3e3838"/><path d="M0 20 H34 Q37 20 37 21 M0 23.8 H34 Q37 23.8 37 24.8 M0 27.3 H34 Q37 27.3 37 28.3 M0 30.8 H34 Q37 30.8 37 31.8" stroke="#fafafa" stroke-width="2.2" fill="none"/><path d="M0 22.3 H30 M0 25.8 H30 M0 29.3 H28" stroke="url(#gpl)" stroke-width="1.3"/></svg>
 <div class="nm">pexels-宇航-钱-7261506</div><div class="du">0:09</div>
 <div class="c sz">34.08 MB</div><div class="c dt">26.01.2022 14:16</div><div class="c au" style="letter-spacing:-0.45px">Elena S</div>
 <svg class="eye" width="20" height="20" viewBox="0 0 20 20"><path d="M1.8 10.35 C2.4 7 5.6 4.6 9.9 4.6 C14.2 4.6 17.4 7 18 10.35 C17.4 13.7 14.2 16.1 9.9 16.1 C5.6 16.1 2.4 13.7 1.8 10.35Z" fill="none" stroke="#a8a8a8" stroke-width="1.6"/><circle cx="9.9" cy="10.3" r="2.35" fill="none" stroke="#a8a8a8" stroke-width="1.6"/></svg><div class="c vw">0</div><svg class="dots" width="6" height="20" viewBox="0 0 6 20"><circle cx="3" cy="3.5" r="2"/><circle cx="3" cy="10.5" r="2"/><circle cx="3" cy="17.5" r="2"/></svg>
</div>
<div class="row" style="top:895px">
 <svg class="th" width="56" height="32" viewBox="0 0 56 32"><defs><filter id="bdm" x="-10%" y="-10%" width="120%" height="120%"><feGaussianBlur stdDeviation="0.3"/></filter></defs><g filter="url(#bdm)"><rect x="-2" y="-2" width="60" height="36" fill="#a2a2a2"/><path d="M8 33 Q14 25 18 23.8 H27 Q32 25 37.5 33Z" fill="#5e5e5e"/><path d="M17 21 V19 Q17 13.5 22.2 13.5 Q27.4 13.5 27.4 19 V21Z" fill="#8a8a8a"/><rect x="16.5" y="18" width="11.5" height="1.2" fill="#5a5a5a"/><rect x="17.5" y="21" width="10" height="2.5" fill="#c4c4c4"/><rect x="21.6" y="3" width="1.2" height="11" fill="#777"/></g><circle cx="22.2" cy="9" r="0.9" fill="#444"/><path d="M13 33 L16 25 M18 33 L19.5 24.5 M23 33 V24 M28 33 L26.5 24.5 M33 33 L29.5 25" stroke="#4a4a4a" stroke-width=".8"/></svg>
 <div class="nm">pexels-david-gallie-10275544</div><div class="du">0:10</div>
 <div class="c sz">24.12 MB</div><div class="c dt">26.01.2022 14:05</div><div class="c au" style="letter-spacing:-0.45px">Elena S</div>
 <svg class="eye" width="20" height="20" viewBox="0 0 20 20"><path d="M1.8 10.35 C2.4 7 5.6 4.6 9.9 4.6 C14.2 4.6 17.4 7 18 10.35 C17.4 13.7 14.2 16.1 9.9 16.1 C5.6 16.1 2.4 13.7 1.8 10.35Z" fill="none" stroke="#a8a8a8" stroke-width="1.6"/><circle cx="9.9" cy="10.3" r="2.35" fill="none" stroke="#a8a8a8" stroke-width="1.6"/></svg><div class="c vw">0</div><svg class="dots" width="6" height="20" viewBox="0 0 6 20"><circle cx="3" cy="3.5" r="2"/><circle cx="3" cy="10.5" r="2"/><circle cx="3" cy="17.5" r="2"/></svg>
</div>
<div class="row" style="top:951px">
 <svg class="th" width="56" height="32" viewBox="0 0 56 32"><defs><filter id="bdm" x="-10%" y="-10%" width="120%" height="120%"><feGaussianBlur stdDeviation="0.3"/></filter></defs><g filter="url(#bdm)"><rect x="-2" y="-2" width="60" height="36" fill="#a2a2a2"/><path d="M8 33 Q14 25 18 23.8 H27 Q32 25 37.5 33Z" fill="#5e5e5e"/><path d="M17 21 V19 Q17 13.5 22.2 13.5 Q27.4 13.5 27.4 19 V21Z" fill="#8a8a8a"/><rect x="16.5" y="18" width="11.5" height="1.2" fill="#5a5a5a"/><rect x="17.5" y="21" width="10" height="2.5" fill="#c4c4c4"/><rect x="21.6" y="3" width="1.2" height="11" fill="#777"/></g><circle cx="22.2" cy="9" r="0.9" fill="#444"/><path d="M13 33 L16 25 M18 33 L19.5 24.5 M23 33 V24 M28 33 L26.5 24.5 M33 33 L29.5 25" stroke="#4a4a4a" stroke-width=".8"/></svg>
 <div class="nm">pexels-david-gallie-10275544</div><div class="du">0:10</div>
 <div class="c sz">24.06 MB</div><div class="c dt">26.01.2022 14:14</div><div class="c au" style="letter-spacing:-0.45px">Elena S</div>
 <svg class="eye" width="20" height="20" viewBox="0 0 20 20"><path d="M1.8 10.35 C2.4 7 5.6 4.6 9.9 4.6 C14.2 4.6 17.4 7 18 10.35 C17.4 13.7 14.2 16.1 9.9 16.1 C5.6 16.1 2.4 13.7 1.8 10.35Z" fill="none" stroke="#a8a8a8" stroke-width="1.6"/><circle cx="9.9" cy="10.3" r="2.35" fill="none" stroke="#a8a8a8" stroke-width="1.6"/></svg><div class="c vw">0</div><svg class="dots" width="6" height="20" viewBox="0 0 6 20"><circle cx="3" cy="3.5" r="2"/><circle cx="3" cy="10.5" r="2"/><circle cx="3" cy="17.5" r="2"/></svg>
</div>
</div>
</body></html>
